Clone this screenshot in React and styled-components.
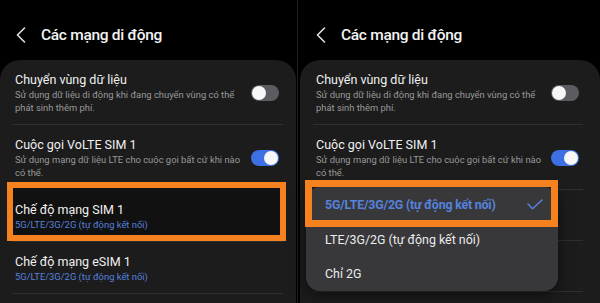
import styled, { createGlobalStyle } from "styled-components";

const GlobalStyle = createGlobalStyle`
  body {
    margin: 0;
    background: #000;
    font-family: Roboto, "Noto Sans", "DejaVu Sans", sans-serif;
  }
`;

const orange = "#f5821f";
const blue = "#5682de";

const Screen = styled.div`
  display: flex;
  width: 600px;
  height: 303px;
  overflow: hidden;
  background: #000;
`;

const Panel = styled.div`
  width: ${({ $w }) => $w}px;
  padding-left: ${({ $shift }) => $shift}px;
  box-sizing: border-box;
  flex-shrink: 0;
  display: flex;
  flex-direction: column;
`;

const Separator = styled.div`
  width: 1px;
  flex-shrink: 0;
  background: #1f1f1f;
`;

const Header = styled.div`
  height: 60px;
  box-sizing: border-box;
  padding: 10px 0 0 16px;
  display: flex;
  align-items: center;
  gap: 15px;
  flex-shrink: 0;
`;

const Title = styled.h1`
  margin: 0;
  font-size: 15.5px;
  font-weight: 500;
  color: #f4f4f4;
  letter-spacing: -0.3px;
`;

const Card = styled.div`
  position: relative;
  flex: 1;
  margin-right: ${({ $mr }) => $mr}px;
  padding: 0 ${({ $pr }) => $pr}px 0 ${({ $pl }) => $pl}px;
  background: #1c1c1c;
  border-radius: 20px 20px 0 0;
`;

const Row = styled.div`
  position: relative;
  z-index: 0;
  display: flex;
  align-items: center;
  padding: 11px 4px 10px 3px;
  border-bottom: 1px solid #2f2f2f;

  ${({ $marked }) =>
    $marked &&
    `
    &::before {
      content: "";
      position: absolute;
      top: -8px;
      bottom: 0px;
      left: -5px;
      right: -3px;
      border: 6px solid ${orange};
      background: #121111;
      z-index: 0;
    }
  `}
`;

/* row hidden under the open menu: only its divider shows */
const CoveredRow = styled.div`
  height: ${({ $h }) => $h}px;
  border-bottom: 1px solid #2f2f2f;
`;

const RowText = styled.div`
  position: relative;
  z-index: 1;
  flex: 1;
  white-space: nowrap;
`;

const RowTitle = styled.div`
  font-size: 12.5px;
  line-height: 17px;
  color: #f0f0f0;
`;

const RowSub = styled.div`
  font-size: 9.4px;
  line-height: 13px;
  color: ${({ $accent }) => ($accent ? blue : "#9a9a9a")};
`;

const Track = styled.div`
  position: relative;
  width: 28px;
  height: 16px;
  border-radius: 8px;
  flex-shrink: 0;
  display: flex;
  align-items: center;
  justify-content: ${({ $on }) => ($on ? "flex-end" : "flex-start")};
  padding: 0 1px;
  box-sizing: border-box;
  background: ${({ $on }) => ($on ? "#3e6fe3" : "#5c5c60")};
`;

const Knob = styled.div`
  width: 14px;
  height: 14px;
  border-radius: 50%;
  background: #f7f7f7;
`;

const Menu = styled.div`
  position: absolute;
  top: 127px;
  left: 6px;
  width: 252px;
  background: #38383b;
  border-radius: 14px;
  box-shadow: 0 4px 14px rgba(0, 0, 0, 0.55);
  z-index: 2;
`;

const MenuItem = styled.div`
  height: ${({ $h }) => $h}px;
  display: flex;
  align-items: center;
  justify-content: space-between;
  padding: 0 15px 0 19px;
  font-size: 12.4px;
  font-weight: ${({ $selected }) => ($selected ? 700 : 400)};
  letter-spacing: ${({ $selected }) => ($selected ? "-0.2px" : "0")};
  color: ${({ $selected }) => ($selected ? blue : "#ececec")};
`;

const Marker = styled.div`
  position: absolute;
  top: -7px;
  left: -1px;
  width: 253px;
  height: 47px;
  box-sizing: border-box;
  border: 7px solid ${orange};
  pointer-events: none;
`;

const Chevron = () => (
  <svg width="10" height="16" viewBox="0 0 10 16">
    <polyline
      points="8.5,1 1.5,8 8.5,15"
      fill="none"
      stroke="#e0e0e0"
      strokeWidth="1.6"
      strokeLinecap="round"
      strokeLinejoin="round"
    />
  </svg>
);

const Check = () => (
  <svg width="16" height="11" viewBox="0 0 16 11">
    <polyline
      points="1,5 5.5,9.8 15,1"
      fill="none"
      stroke={blue}
      strokeWidth="1.5"
      strokeLinecap="round"
      strokeLinejoin="round"
    />
  </svg>
);

const Toggle = ({ on }) => (
  <Track $on={on}>
    <Knob />
  </Track>
);

function SettingsList({ marked, menuOpen }) {
  return (
    <>
      <Row>
        <RowText>
          <RowTitle>Chuyển vùng dữ liệu</RowTitle>
          <RowSub>
            Sử dụng dữ liệu di động khi đang chuyển vùng có thể
            <br />
            phát sinh thêm phí.
          </RowSub>
        </RowText>
        <Toggle on={false} />
      </Row>
      <Row>
        <RowText>
          <RowTitle>Cuộc gọi VoLTE SIM 1</RowTitle>
          <RowSub>
            Sử dụng mạng dữ liệu LTE cho cuộc gọi bất cứ khi nào
            <br />
            có thể.
          </RowSub>
        </RowText>
        <Toggle on />
      </Row>
      {menuOpen ? (
        <>
          <CoveredRow $h={50} />
          <CoveredRow $h={50} />
        </>
      ) : (
        <>
          <Row $marked={marked}>
            <RowText>
              <RowTitle>Chế độ mạng SIM 1</RowTitle>
              <RowSub $accent>5G/LTE/3G/2G (tự động kết nối)</RowSub>
            </RowText>
          </Row>
          <Row>
            <RowText>
              <RowTitle>Chế độ mạng eSIM 1</RowTitle>
              <RowSub $accent>5G/LTE/3G/2G (tự động kết nối)</RowSub>
            </RowText>
          </Row>
        </>
      )}
    </>
  );
}

export default function App() {
  return (
    <>
      <GlobalStyle />
      <Screen>
        <Panel $w={297} $shift={0}>
          <Header>
            <Chevron />
            <Title>Các mạng di động</Title>
          </Header>
          <Card $mr={1} $pl={12} $pr={13}>
            <SettingsList marked />
          </Card>
        </Panel>
        <Separator />
        <Panel $w={302} $shift={2}>
          <Header>
            <Chevron />
            <Title>Các mạng di động</Title>
          </Header>
          <Card $mr={0} $pl={13} $pr={17}>
            <SettingsList menuOpen />
            <Menu>
              <MenuItem $h={35} $selected>
                5G/LTE/3G/2G (tự động kết nối)
                <Check />
              </MenuItem>
              <MenuItem $h={34}>LTE/3G/2G (tự động kết nối)</MenuItem>
              <MenuItem $h={35}>Chỉ 2G</MenuItem>
              <Marker />
            </Menu>
          </Card>
        </Panel>
      </Screen>
    </>
  );
}
